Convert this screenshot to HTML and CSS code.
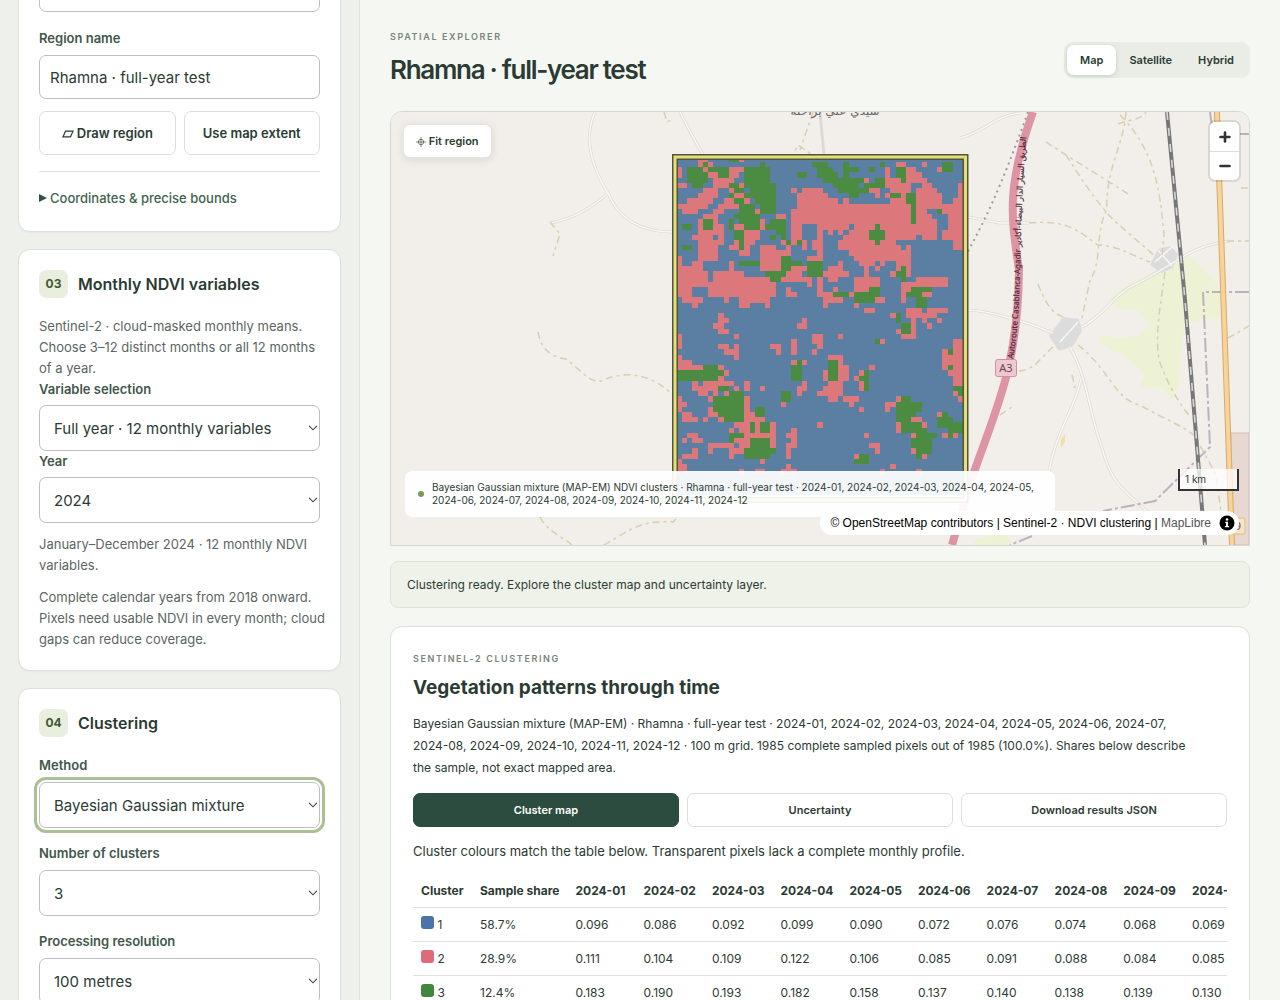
FILE: index.html
```html
<!DOCTYPE html>
<html lang="en">
<head>
  <title>Spatial Explorer</title>
  <meta charset="UTF-8">
  <meta name="viewport" content="width=device-width,initial-scale=1">
  <link rel="stylesheet" href="styles.css">
</head>
<body>
  <div class="app">
    <aside class="sidebar">
      <section class="card card-region">
        <select aria-label="Preset region"><option></option></select>
        <div class="field">
          <label for="region">Region name</label>
          <input type="text" id="region" value="Rhamna · full-year test">
        </div>
        <div class="pair">
          <button type="button">
            <svg width="12" height="8" viewBox="0 0 12 8"><path d="M3.5 1.2H11L8.5 6.8H1z" fill="none" stroke="currentColor" stroke-width="1.2"/></svg>
            Draw region
          </button>
          <button type="button">Use map extent</button>
        </div>
        <details>
          <summary>Coordinates &amp; precise bounds</summary>
        </details>
      </section>

      <section class="card">
        <header><span class="step">03</span><h2>Monthly NDVI variables</h2></header>
        <p>Sentinel-2 · cloud-masked monthly means. Choose 3–12 distinct months or all 12 months of a year.</p>
        <div class="field">
          <label for="selection">Variable selection</label>
          <select id="selection"><option>Full year · 12 monthly variables</option></select>
        </div>
        <div class="field">
          <label for="year">Year</label>
          <select id="year"><option>2024</option></select>
        </div>
        <p class="note">January–December 2024 · 12 monthly NDVI<br>variables.</p>
        <p class="note">Complete calendar years from 2018 onward.<br>Pixels need usable NDVI in every month; cloud<br>gaps can reduce coverage.</p>
      </section>

      <section class="card roomy">
        <header><span class="step">04</span><h2>Clustering</h2></header>
        <div class="field">
          <label for="method">Method</label>
          <select id="method" class="focused"><option>Bayesian Gaussian mixture</option></select>
        </div>
        <div class="field">
          <label for="clusters">Number of clusters</label>
          <select id="clusters"><option>3</option></select>
        </div>
        <div class="field">
          <label for="resolution">Processing resolution</label>
          <select id="resolution"><option>100 metres</option></select>
        </div>
      </section>
    </aside>

    <main>
      <div class="top">
        <div>
          <p class="eyebrow">SPATIAL EXPLORER</p>
          <h1>Rhamna · full-year test</h1>
        </div>
        <div class="toggle">
          <button type="button" class="on">Map</button>
          <button type="button">Satellite</button>
          <button type="button">Hybrid</button>
        </div>
      </div>

      <div class="map">
        <svg class="tiles" viewBox="391 112 858 433" preserveAspectRatio="xMidYMid slice">
          <rect x="391" y="112" width="858" height="433" fill="#f2efea"/>
          <!-- scrub and residential -->
          <g fill="#edf2d5">
            <path d="M1107 299L1130 283L1152 274L1172 263L1190 256L1209 274L1222 290L1224 318L1203 320L1185 326L1181 345L1179 384L1172 399L1160 387L1139 388L1145 374L1130 361L1117 352L1100 344L1098 335L1120 338L1139 335L1150 325L1136 309L1118 309z"/>
            <path d="M975 540l30-8l8 13h-40z"/>
          </g>
          <path d="M1231 433h18v112h-18z" fill="#e8d8d2" stroke="#d9b9ba"/>
          <g fill="#dcdcdc">
            <path d="M1150 265l8-16l12-3l8 8l-5 14l-12 5z"/>
            <path d="M1049 336l14-19l16 2l3 12l-9 15l-14 5z"/>
          </g>
          <!-- small roads -->
          <g fill="none" stroke="#dcdad5" stroke-width="3">
            <path d="M595 112C582 140 594 171 608 193C594 206 574 219 550 223M608 193C620 222 645 232 673 232M680 112C689 130 697 145 704 156M960 138C985 132 993 116 1020 113M968 217L1000 223H1029M968 310C992 311 1030 323 1053 333M1082 327C1104 316 1113 294 1136 284C1173 266 1190 245 1230 241M1070 347C1088 379 1089 413 1102 448C1112 485 1123 489 1150 514M1081 379C1075 410 1055 430 1048 478L1040 520M820 112l4 43"/>
          </g>
          <g fill="none" stroke="#f8f6f2" stroke-width="1.6">
            <path d="M595 112C582 140 594 171 608 193C594 206 574 219 550 223M608 193C620 222 645 232 673 232M680 112C689 130 697 145 704 156M960 138C985 132 993 116 1020 113M968 217L1000 223H1029M968 310C992 311 1030 323 1053 333M1082 327C1104 316 1113 294 1136 284C1173 266 1190 245 1230 241M1070 347C1088 379 1089 413 1102 448C1112 485 1123 489 1150 514M1081 379C1075 410 1055 430 1048 478L1040 520M1155 262l18-16M1060 342l18-20M1158 250l14 16"/>
          </g>
          <!-- tracks -->
          <g fill="none" stroke="#d9cfae" stroke-width="1.5" stroke-dasharray="7 4 3 4">
            <path d="M550 222L560 234L553 256M538 332C542 352 553 357 566 359C583 372 590 383 601 381C625 370 650 373 673 395M664 112l3 10l6-3M813 112l-13 38M790 160l8-15l20 14M540 517C548 532 560 535 572 545M604 545C630 530 640 520 673 522L680 515"/>
            <path d="M1126 112C1124 145 1105 170 1107 209C1094 235 1103 260 1090 280L1082 318M1118 124C1135 118 1140 120 1146 112M1120 115C1155 150 1160 190 1164 235L1162 255M1046 142L1066 155L1130 195M1066 155C1082 180 1100 208 1118 224L1155 256M1029 223C1070 219 1080 233 1098 245C1120 246 1130 255 1150 262M1165 272C1160 310 1155 330 1159 360C1170 390 1180 404 1191 418M1038 284C1048 310 1055 315 1067 318M1019 371C1035 370 1040 358 1053 347M1078 345C1110 370 1115 400 1140 405C1165 420 1180 424 1195 436L1216 475L1221 512M1228 338l21-12M1227 241h22M1000 415l12-8M1072 375l3 12l-5 2M1241 188h8"/>
          </g>
          <g fill="none" stroke="#bfb0bf" stroke-width="2" stroke-dasharray="14 3 3 3">
            <path d="M1249 292H1203L1210 447L1155 501L1103 511M1032 536L1010 545M1210 112l2 14M1240 134h9"/>
          </g>
          <path d="M1061 440l4-6v8l-4 6z" fill="#f0dfa8"/>
          <!-- railway -->
          <path d="M1167 112L1185 300L1205 545" fill="none" stroke="#777" stroke-width="4"/>
          <path d="M1167 112L1185 300L1205 545" fill="none" stroke="#d8d8d8" stroke-width="1.6" stroke-dasharray="8 8"/>
          <!-- main roads -->
          <path d="M1217 112C1220 220 1224 320 1232 545" fill="none" stroke="#d9a968" stroke-width="6"/>
          <path d="M1217 112C1220 220 1224 320 1232 545" fill="none" stroke="#f8d49c" stroke-width="4"/>
          <path d="M1033 112C1005 190 1012 220 1019 270C1018 370 995 410 972 478L952 545" fill="none" stroke="#dd94a4" stroke-width="8"/>
          <path d="M1028 112C1000 190 985 220 966 255" fill="none" stroke="#9c9c98" stroke-width="2" stroke-dasharray="2 4"/>
          <path id="a3" d="M1013 359C1024 300 1017 220 1028 120" fill="none"/>
          <text class="road"><textPath href="#a3">Autoroute Casablanca-Agadir الطريق السيار الدار البيضاء-أكادير</textPath></text>
          <rect x="995.500" y="359.500" width="21" height="17" rx="2" fill="#edc9d1" stroke="#d38f9f"/>
          <text class="shield" x="1006" y="372">A3</text>
          <rect x="1228" y="518" width="17" height="16" rx="2" fill="#f9e5c3" stroke="#d8bb8d"/>
          <text class="shield" x="1238" y="530">9</text>
          <text class="place" x="835" y="115">سيدي علي براحلة</text>
          <g id="raster" transform="translate(676.700 156.700) scale(5.210)" shape-rendering="crispEdges"></g>
          <path d="M675 500V157H965.500V500z" fill="none" stroke="#49583f" stroke-width="6"/>
          <path d="M675 500V157H965.500V500z" fill="none" stroke="#ecdc78" stroke-width="3"/>
        </svg>
        <button type="button" class="fit">
          <svg width="10" height="10" viewBox="0 0 10 10" fill="none" stroke="currentColor" stroke-width=".6"><circle cx="5" cy="5" r="2.700"/><path d="M5 0v10M0 5h10"/></svg>
          Fit region
        </button>
        <div class="zoom">
          <button type="button" aria-label="Zoom in"><svg width="12" height="12" viewBox="0 0 12 12"><path d="M6 1.500v9M1.500 6h9"/></svg></button>
          <button type="button" aria-label="Zoom out"><svg width="12" height="12" viewBox="0 0 12 12"><path d="M1.500 6h9"/></svg></button>
        </div>
        <div class="legend">
          <i></i>
          <span>Bayesian Gaussian mixture (MAP-EM) NDVI clusters · Rhamna · full-year test · 2024-01, 2024-02, 2024-03, 2024-04, 2024-05, 2024-06, 2024-07, 2024-08, 2024-09, 2024-10, 2024-11, 2024-12</span>
        </div>
        <div class="scale">1 km</div>
        <div class="credits">
          <span>© OpenStreetMap contributors | Sentinel-2 · NDVI clustering | <a href="#">MapLibre</a></span>
          <svg width="16" height="16" viewBox="0 0 16 16"><circle cx="8" cy="8" r="7.500"/><path d="M6.200 6.800H9V11h1.200v1.300H5.900V11H7V8.100h-.8z" fill="#fff"/><circle cx="8" cy="4.500" r="1.300" fill="#fff"/></svg>
        </div>
      </div>

      <p class="status">Clustering ready. Explore the cluster map and uncertainty layer.</p>

      <section class="results">
        <p class="eyebrow">SENTINEL-2 CLUSTERING</p>
        <h2>Vegetation patterns through time</h2>
        <p class="summary">Bayesian Gaussian mixture (MAP-EM) · Rhamna · full-year test · 2024-01, 2024-02, 2024-03, 2024-04, 2024-05, 2024-06, 2024-07,<br>2024-08, 2024-09, 2024-10, 2024-11, 2024-12 · 100 m grid. 1985 complete sampled pixels out of 1985 (100.0%). Shares below describe<br>the sample, not exact mapped area.</p>
        <div class="actions">
          <button type="button" class="on">Cluster map</button>
          <button type="button">Uncertainty</button>
          <button type="button">Download results JSON</button>
        </div>
        <p class="caption">Cluster colours match the table below. Transparent pixels lack a complete monthly profile.</p>
        <div class="scroll">
          <table>
            <thead>
              <tr><th>Cluster</th><th>Sample share</th><th>2024-01</th><th>2024-02</th><th>2024-03</th><th>2024-04</th><th>2024-05</th><th>2024-06</th><th>2024-07</th><th>2024-08</th><th>2024-09</th><th>2024-10</th></tr>
            </thead>
            <tbody>
              <tr><td><i class="c1"></i> 1</td><td>58.7%</td><td>0.096</td><td>0.086</td><td>0.092</td><td>0.099</td><td>0.090</td><td>0.072</td><td>0.076</td><td>0.074</td><td>0.068</td><td>0.069</td></tr>
              <tr><td><i class="c2"></i> 2</td><td>28.9%</td><td>0.111</td><td>0.104</td><td>0.109</td><td>0.122</td><td>0.106</td><td>0.085</td><td>0.091</td><td>0.088</td><td>0.084</td><td>0.085</td></tr>
              <tr><td><i class="c3"></i> 3</td><td>12.4%</td><td>0.183</td><td>0.190</td><td>0.193</td><td>0.182</td><td>0.158</td><td>0.137</td><td>0.140</td><td>0.138</td><td>0.139</td><td>0.130</td></tr>
            </tbody>
          </table>
        </div>
      </section>
    </main>
  </div>
  <script src="clusters.js"></script>
</body>
</html>
```

FILE: clusters.js
```js
// Cluster raster, one entry per block of cells: column,row,width,height (size defaults to 1)
const layers = [
  ['#5b7fa3', '0,0,55,65'],
  ['#dc787c', `0,2,1,2 4,1 5,2 6,1 4,0,2 12,0 6,3,2 10,2,3 10,3,2 7,4,4 7,5,3 0,5,2 12,5
    10,6 5,6,3 4,7,4 2,8,5 0,9,6 1,10,3 11,7,2 13,8 9,8,2 8,9,4 7,10,2 5,11,3 4,12,1,8 4,14,3,6 7,12,1,3 7,16,1,4 8,13,1,4 3,15
    15,10 19,11,2 16,12,1,2 11,13,2 13,14,3 13,15,3 13,16,2 11,16 10,17,2 13,17 12,18,2
    16,17,3,5 19,18,3 19,19,1,3 20,16 21,17
    22,6 24,6,4 23,7,6 23,8,8 32,8 23,9,32 22,10,26 51,10,4 22,11,27 52,11,3 22,12,28 52,12,3
    22,13,2 27,13,6 34,13,16 52,13,3 22,14,2 27,14 29,14 31,14 33,14,17 51,14,4 22,15,2 27,15,1,5 32,15,14 47,15,3 51,15,4
    22,16 26,16,1,2 24,16,1,2 31,16,11 53,16,2 31,17,12 44,17 53,17,2 33,18,12 34,19,11 25,19,3
    42,1,2 40,2,1,2 44,2,2 44,3,3 40,4,8 36,4 40,5,5 47,5,2 37,6,2 41,6,4 46,6,4 38,7 40,7 43,7 46,7,5 41,8,3 46,8,5
    54,5,1,3 53,8,2 47,1 50,2,2
    31,20 35,20,3 39,20 42,20,3 29,21,3 36,21 38,21 42,21 44,21 28,22,5 36,22 41,22 44,22 29,23,2 34,23,5 46,23,6
    27,23,1,3 34,24,5 43,24,9 30,25 34,25,3 43,25,2 27,26,3 33,26 43,26 47,26,2 28,27,4 38,27,2 43,27 28,28 34,28 36,29,2 44,29,3 48,29,4
    41,30 44,30,6 45,31,1,4 47,31 50,31 48,32 42,33 43,34,3 31,34 26,34,2 26,35,2 39,35 27,36 26,37
    51,37,1,4 53,35,2,2 52,37,3,4 52,41,3 53,42,2 53,43,2 53,45 54,46
    29,38,3 31,39,1,4 32,40,1,3 28,41,1,2 29,43,3,2 28,44 27,45,5 29,46,2 32,46,3 33,47 35,48
    37,40 35,41 34,42 35,43,1,2 42,46 40,47,2 40,48 45,50,2 47,51 42,51,1,2 45,53 45,56 47,57 27,51 36,53 37,55,2 38,56
    34,57 41,59 39,60 46,60 50,49 51,53 53,53
    8,30 8,31,2 7,32,2 8,33,2 11,34 0,34,1,3 8,36,2 9,37,3 11,36 11,38 18,36,2 19,37 22,35,1,3 24,31 23,32,2
    0,38 0,39,3 0,40,5 8,40 9,41 8,42 3,43 5,43,6 3,44,5 4,45,2 7,45 11,44 9,45 13,43,1,2 16,44 22,39 24,39 24,43 23,44,2 23,45
    0,46,1,3 1,47 6,46 6,48 6,49,2 8,50 5,50 1,49,2 1,50,3 20,47 13,46,1,10 14,49 14,50,3 11,51,3 15,51,1,2 10,52 12,52,2
    13,53,6 18,51,1,5 11,54,3 6,55,5 12,55,2 6,56 10,56,3 10,57 16,58 2,53,2 1,54 3,54,2 3,56 1,57,3 0,58 0,59,2 0,60,2
    22,52,1,4 21,53 21,55,1,3 21,59 12,60 15,60,2 20,60,3
    0,19,1,2 3,20,2 0,21,5 0,22,6 7,22,6 0,23,6 7,23,11 0,24,19 0,25,3 6,25,13 0,26,3 6,26,13 1,27,4 9,27 12,27,6 3,28 12,28,2 17,28
    10,20,1,2 22,21,5 21,22,3 20,23,6 25,24 21,25 21,26,2`],
  ['#4b8b42', `5,1 2,2,3 2,3,4,2 3,5,2 6,2,4 8,3,2 10,0,2 16,1 13,2,5,3 10,5,2 13,5,6 11,6,2 14,6,5 10,7 13,7,6 11,8,2 15,8,4
    12,9,3 16,9,3 12,10,3 16,10,3 11,11,5 12,12,4 10,12,1,2 13,13,3 18,12,3 17,13,4 19,14,2 18,15 20,15 21,16 23,16
    11,14,2,2 12,16,1,2 1,13,2 5,12,2,2 1,17,2 12,20,4 20,19,2 20,20,4 20,21,2 17,22,4 18,23,2 25,20,3,3 23,3,2
    26,1,3 27,2,3 32,1 39,1 32,2,3 37,2 27,3,4 32,3 28,4,8 30,5,5 36,5,4 38,4,2 31,6,6 33,7,2 42,2,2,2 43,4 51,1,2,2
    41,7,2 44,7,2,2 45,9,1,4 50,10 38,13,1,4 37,14,3,2 43,21,1,3 42,22,2 30,26,3 37,25,2 34,26,5 34,27,4
    45,25,4 44,26,3 46,27,2 46,28,2 42,30,1,2 43,32,2,2 38,35 29,39,2,4 36,41,1,4 35,42 52,37 52,40 53,44,2 54,45
    43,46,2 42,47,5,2 42,49,4 42,50,3 43,51,4 43,52,5 46,53,4 45,54,4 45,55,4 46,56,3 46,57 51,49 50,50,3 50,51,5 52,52,3 52,53
    35,57,2 34,58,3 5,40,3 0,41,9 0,42,8 22,40,2,3 23,39 8,44,2 10,45,3 7,46,6,3 8,49,5 9,50,4 20,45,2,2 15,48,2,2
    14,51,1,2 16,51,2,2 10,53,3 10,54 14,54,4 14,55,4 13,56,6 13,57,5`]
];

document.getElementById('raster').innerHTML = layers.map(([color, blocks]) => {
  const d = blocks.trim().split(/\s+/).map(b => {
    const [x, y, w = 1, h = 1] = b.split(',');
    return `M${x} ${y}h${w}v${h}h-${w}z`;
  }).join('');
  return `<path fill="${color}" d="${d}"/>`;
}).join('');
```

FILE: styles.css
```css
* {
  box-sizing: border-box;
}
body {
  margin: 0;
  background: #f5f8f2;
  color: #2b3b34;
  font: 13px/21px Inter, sans-serif;
}
h1, h2, p {
  margin: 0;
}
button, input, select {
  font-family: inherit;
  color: inherit;
}
button {
  background: #fff;
  border: 1px solid #dcdfd9;
  border-radius: 7px;
  font-size: 11px;
  font-weight: 600;
  padding: 0;
}
.app {
  display: grid;
  grid-template-columns: 360px minmax(0, 1fr);
  height: 100vh;
  overflow: hidden;
}

/* sidebar */
.sidebar {
  display: flex;
  flex-direction: column;
  gap: 17px;
  padding: 0 18px;
  background: #eef0eb;
  border-right: 1px solid #dfe3dc;
  overflow: hidden;
}
.card {
  flex: none;
  padding: 20px;
  background: #fff;
  border: 1px solid #dbe0d8;
  border-radius: 12px;
  box-shadow: 0 1px 2px rgba(40, 60, 50, .04);
}
.card-region {
  margin-top: -53px;
}
.card header {
  display: flex;
  align-items: center;
  gap: 10px;
  margin-bottom: 18px;
}
.card h2 {
  font-size: 16px;
  font-weight: 600;
}
.step {
  width: 29px;
  height: 28px;
  border-radius: 7px;
  background: #e9efdf;
  color: #44572f;
  font-size: 12px;
  font-weight: 700;
  line-height: 28px;
  text-align: center;
}
.card p {
  color: #5a665f;
}
.card .note {
  margin-top: 11px;
  white-space: nowrap;
}
.field {
  display: grid;
  gap: 6px;
}
.field label {
  color: #42564a;
  font-weight: 600;
  line-height: 20px;
}
.card-region .field {
  gap: 7px;
  margin: 16px 0 12px;
}
.roomy .field {
  gap: 7px;
  margin-bottom: 15px;
}
.card input, .card select {
  width: 100%;
  height: 46px;
  padding: 0 10px;
  background: #fff;
  border: 1px solid #bdbfbc;
  border-radius: 7px;
  font-size: 15px;
}
.card select {
  appearance: none;
  padding: 0 14px;
  background: #fff url("data:image/svg+xml,%3Csvg xmlns='http://www.w3.org/2000/svg' width='10' height='6'%3E%3Cpath d='M1 .8l4 4 4-4' fill='none' stroke='%23444' stroke-width='1.1'/%3E%3C/svg%3E") no-repeat right 1px center;
}
.card-region input, .card-region select {
  height: 44px;
  display: block;
}
.card-region select {
  background-image: none;
}
.card .focused {
  outline: 3px solid #abc095;
  outline-offset: 2px;
}
.pair {
  display: grid;
  grid-template-columns: 1fr 1fr;
  gap: 8px;
  padding-bottom: 16px;
  border-bottom: 1px solid #e0e3de;
}
.pair button {
  height: 44px;
  font-size: 13px;
}
details {
  padding: 15px 0 2px;
}
summary {
  display: flex;
  align-items: center;
  gap: 3px;
  color: #42634e;
  font-weight: 500;
  line-height: 22px;
}
summary::before {
  content: "";
  border: 4px solid transparent;
  border-left: 8px solid #35513f;
  border-right: 0;
}

/* main column */
main {
  padding: 26px 30px 0;
}
.top {
  display: flex;
  justify-content: space-between;
  align-items: center;
  height: 68px;
  margin-bottom: 17px;
}
.eyebrow {
  color: #77857b;
  font-size: 9px;
  font-weight: 600;
  letter-spacing: .18em;
  line-height: 20px;
}
h1 {
  font-size: 26px;
  font-weight: 600;
  letter-spacing: -.05em;
  line-height: 46px;
}
.toggle {
  display: flex;
  padding: 3px;
  background: #e9ede5;
  border-radius: 9px;
}
.toggle button {
  height: 30px;
  padding: 0 13px;
  background: none;
  border: 0;
}
.toggle .on {
  background: #fff;
  box-shadow: 0 1px 4px rgba(40, 60, 50, .18);
}
.map {
  position: relative;
  height: 435px;
  border: 1px solid #d3d9d1;
  border-radius: 12px 12px 0 0;
  overflow: hidden;
}
.tiles {
  display: block;
  width: 100%;
  height: 100%;
}
.road {
  font: 8px "Noto Sans", "DejaVu Sans", sans-serif;
  fill: #4d2832;
  stroke: #4d2832;
  stroke-width: .2px;
}
.shield {
  font: 11px "Noto Sans", sans-serif;
  fill: #70444e;
  text-anchor: middle;
}
.place {
  font: 12px "DejaVu Sans", sans-serif;
  fill: #666;
  text-anchor: middle;
}
.fit {
  position: absolute;
  top: 12px;
  left: 12px;
  height: 34px;
  padding: 0 12px;
  border-color: #e4e6e1;
  box-shadow: 0 2px 8px rgba(40, 60, 50, .12);
}
.fit svg {
  vertical-align: -2px;
}
.zoom {
  position: absolute;
  top: 10px;
  right: 10px;
  width: 29px;
  background: #fff;
  border-radius: 5px;
  box-shadow: 0 0 0 2px rgba(0, 0, 0, .1);
}
.zoom button {
  display: grid;
  place-items: center;
  width: 29px;
  height: 29px;
  background: none;
  border: 0;
  border-radius: 0;
}
.zoom button + button {
  border-top: 1px solid #ddd;
}
.zoom path {
  stroke: #333;
  stroke-width: 2.6;
  stroke-linecap: round;
}
.legend {
  position: absolute;
  left: 14px;
  bottom: 28px;
  display: flex;
  align-items: center;
  gap: 8px;
  width: 650px;
  padding: 10px 13px;
  background: rgba(255, 255, 255, .93);
  border-radius: 7px;
  font-size: 10px;
  line-height: 13px;
}
.legend i {
  flex: none;
  width: 6px;
  height: 6px;
  border-radius: 50%;
  background: #7c9a57;
}
.scale {
  position: absolute;
  right: 10px;
  bottom: 54px;
  width: 61px;
  height: 22px;
  padding: 0 5px;
  background: rgba(255, 255, 255, .75);
  border: 2px solid #333;
  border-top: 0;
  font-size: 10px;
  line-height: 20px;
}
.credits {
  position: absolute;
  right: 10px;
  bottom: 10px;
  display: flex;
  align-items: center;
  gap: 8px;
  height: 24px;
  padding: 0 4px 0 10px;
  background: #fff;
  border-radius: 12px;
  color: #000;
  font: 12px "Liberation Sans", Arial, sans-serif;
}
.credits a {
  color: #555;
  text-decoration: none;
}
.status {
  margin: 15px 0 18px;
  padding: 12px 16px;
  background: #eff2e9;
  border: 1px solid #dde4d6;
  border-radius: 8px;
  font-size: 12px;
}
.results {
  padding: 22px;
  background: #fff;
  border: 1px solid #dbe0d8;
  border-radius: 12px;
}
.results h2 {
  font-size: 19px;
  font-weight: 700;
  line-height: 38px;
}
.summary {
  margin: 6px 0 14px;
  font-size: 12px;
  line-height: 22px;
}
.actions {
  display: grid;
  grid-template-columns: repeat(3, 1fr);
  gap: 8px;
}
.actions button {
  height: 34px;
}
.actions .on {
  background: #2c4c40;
  border-color: #2c4c40;
  color: #fff;
}
.caption {
  margin: 14px 0 12px;
}
.scroll {
  overflow: hidden;
}
table {
  border-collapse: collapse;
  font-size: 12px;
  white-space: nowrap;
}
th, td {
  min-width: 68px;
  padding: 6px 8px;
  border-bottom: 1px solid #dfe2dd;
  text-align: left;
}
th:first-child, td:first-child {
  min-width: 59px;
}
td i {
  display: inline-block;
  width: 13px;
  height: 13px;
  border-radius: 3px;
}
.c1 {
  background: #4c74a8;
}
.c2 {
  background: #dd6b79;
}
.c3 {
  background: #41873d;
}
```
